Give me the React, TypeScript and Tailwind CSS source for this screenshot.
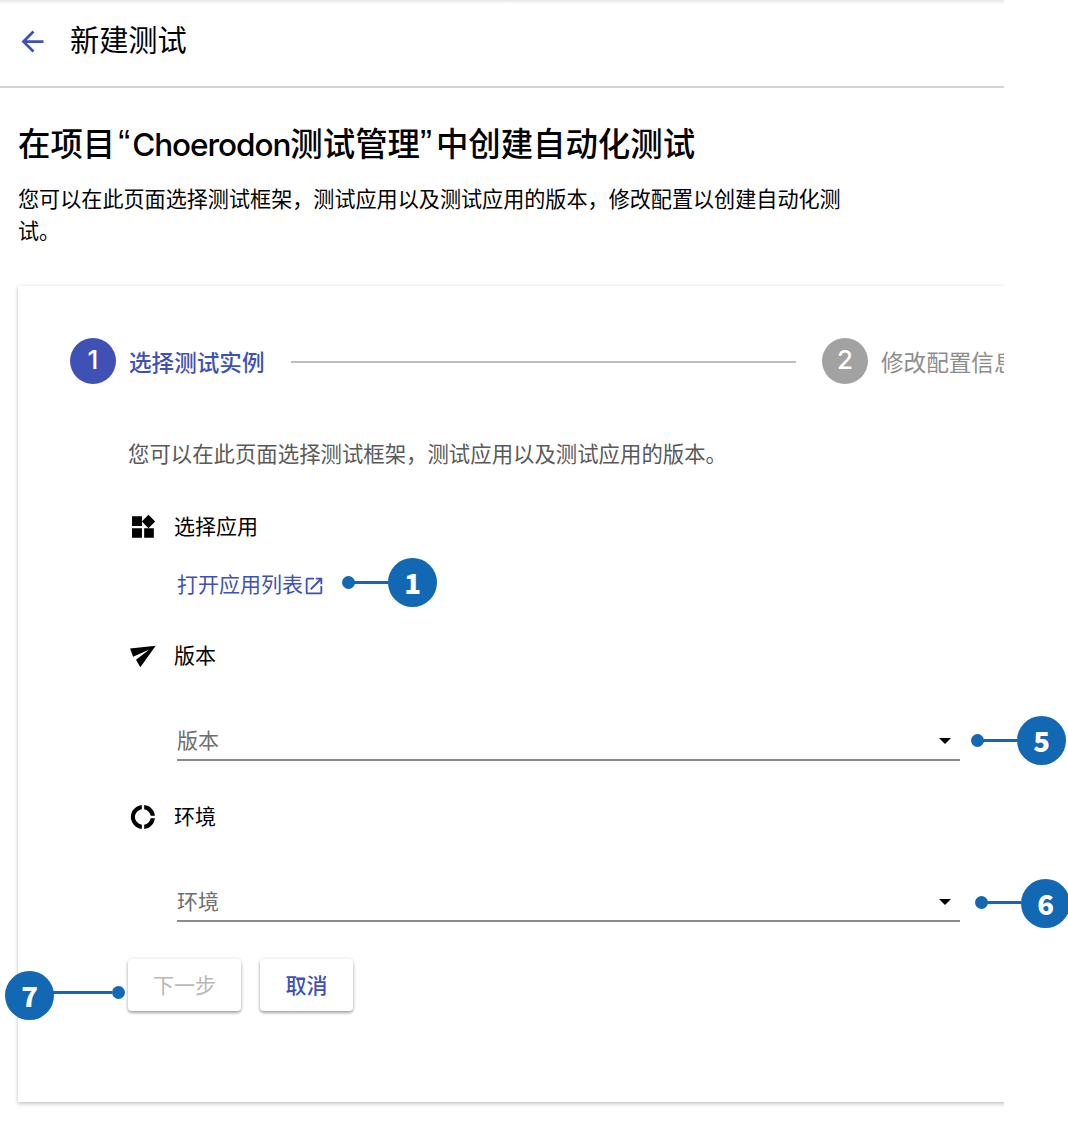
import { ReactNode } from "react";

const cjk = "font-[Inter,'Noto_Sans_CJK_SC',sans-serif]";

function Heading({ icon, label, className }: { icon: ReactNode; label: string; className: string }) {
  return (
    <div className={`flex h-8 items-center ${className}`}>
      <svg viewBox="0 0 24 24" className="mr-[17px] ml-px size-[28px] shrink-0 fill-black">
        {icon}
      </svg>
      <span className="text-[21px] leading-8 text-black">{label}</span>
    </div>
  );
}

function SelectField({ label }: { label: string }) {
  return (
    <div className="mt-[48px] ml-[49px] flex h-[41px] w-[783px] items-start justify-between border-b-2 border-[#8b8b8b]">
      <span className="text-[21px] leading-[41px] text-[#6e6e6e]">{label}</span>
      <svg viewBox="0 0 12 6" className="mt-[18px] mr-[9px] h-[6px] w-[12px] fill-black">
        <path d="M0 0h12L6 6z" />
      </svg>
    </div>
  );
}

function Callout({ n, className, reverse, line, dot }: { n: string; className: string; reverse?: boolean; line: string; dot: string }) {
  return (
    <div className={`absolute flex items-start ${reverse ? "flex-row-reverse" : ""} ${className}`}>
      <div className={`flex items-center ${dot} ${reverse ? "flex-row-reverse" : ""}`}>
        <div className="size-[13px] shrink-0 rounded-full bg-[#1268b3]" />
        <div className={`h-[3px] shrink-0 bg-[#1268b3] ${line}`} />
      </div>
      <div className="flex size-[49px] shrink-0 items-center justify-center rounded-full bg-[#1268b3] font-['Noto_Sans_CJK_SC',sans-serif] text-[27.5px] leading-none font-black text-white">
        <span>{n}</span>
      </div>
    </div>
  );
}

export default function App() {
  return (
    <div className={`relative h-[1125px] w-[1068px] overflow-hidden bg-white ${cjk}`}>
      <div className="h-full w-[1004px] overflow-hidden">
        <header className="flex h-[88px] items-center border-b-2 border-[#d3d3d3] bg-[linear-gradient(#e6e6e6,#ffffff_4px)] pb-[3px]">
          <svg viewBox="0 0 24 24" className="ml-[16px] size-[33px] fill-[#3f51b5]">
            <path d="M20 11H7.83l5.59-5.59L12 4l-8 8 8 8 1.41-1.41L7.83 13H20v-2z" />
          </svg>
          <h1 className="relative -top-px ml-[21px] text-[29.2px] leading-10 text-black">新建测试</h1>
        </header>

        <section className="ml-[18px]">
          <h2 className="mt-[36px] h-10 text-[32.4px] leading-10 font-medium whitespace-nowrap text-black">
            在项目<span className="mr-[2px] ml-[3px] font-['Liberation_Sans',sans-serif] text-[36px]">“</span>
            <span className="text-[31.5px] tracking-[-1.05px]">Choerodon</span>测试管理
            <span className="mr-[4px] font-['Liberation_Sans',sans-serif] text-[36px]">”</span>中创建自动化测试
          </h2>
          <p className="mt-[20px] text-[21.1px] leading-[32px] whitespace-nowrap text-black">
            您可以在此页面选择测试框架，测试应用以及测试应用的版本，修改配置以创建自动化测
            <br />
            试。
          </p>

          <div className="mt-[38px] h-[816px] w-[1100px] pt-[52px] shadow-[0_2px_4px_rgba(0,0,0,0.2),0_0_4px_rgba(0,0,0,0.08)]">
            <div className="ml-[52px] flex h-[46px] items-center whitespace-nowrap">
              <div className="flex size-[46px] items-center justify-center rounded-full bg-[#3f51b5] pb-[2px] text-[26px] leading-none font-medium text-white">1</div>
              <span className="ml-[13px] w-[136px] pt-[3px] text-[22.6px] leading-8 font-medium text-[#3f51b5]">选择测试实例</span>
              <div className="mt-[2px] ml-[26px] h-[2px] w-[505px] bg-[#bdbdbd]" />
              <div className="ml-[26px] flex size-[46px] items-center justify-center rounded-full bg-[#a2a2a2] pb-[2px] text-[26px] leading-none font-medium text-white">2</div>
              <span className="ml-[13px] pt-[3px] text-[22.6px] leading-8 text-[#8c8c8c]">修改配置信息</span>
            </div>

            <div className="ml-[110px]">
              <p className="mt-[54px] h-8 text-[21.4px] leading-8 whitespace-nowrap text-[#595959]">
                您可以在此页面选择测试框架，测试应用以及测试应用的版本。
              </p>

              <Heading
                className="mt-[41px]"
                label="选择应用"
                icon={<path d="M13 13v8.3h8.3v-8.3zM2.6 21.3h8.5v-8.3H2.6zM2.6 2.7v8.5h8.5V2.7zM16.66 1.5L11 7.25 16.66 13l5.76-5.75z" />}
              />
              <a className="mt-[26px] ml-[49px] flex h-8 items-center text-[21px] leading-8 text-[#3f51b5]">
                打开应用列表
                <svg viewBox="0 0 24 24" className="mt-px size-[22px] fill-[#3f51b5]">
                  <path d="M19 19H5V5h7V3H5a2 2 0 0 0-2 2v14a2 2 0 0 0 2 2h14c1.1 0 2-.9 2-2v-7h-2v7zM14 3v2h3.59l-9.83 9.83 1.41 1.41L19 6.41V10h2V3h-7z" />
                </svg>
              </a>

              <Heading className="mt-[39px]" label="版本" icon={<path d="M.9 5.5L22.9 3.2L9.7 21.6L6 15.2L17.5 6.4L3.5 12.6z" />} />
              <SelectField label="版本" />

              <Heading
                className="mt-[40px]"
                label="环境"
                icon={<path d="M11 5.4V1.8C5.8 2.3 1.6 6.8 1.6 12s4.2 9.7 9.4 10.2v-3.6c-3-.5-5.9-3.2-5.9-6.6s2.9-6.1 5.9-6.6zM18.6 11h3.6c-.5-5-4.2-8.7-9.2-9.2v3.6c2.9.5 5.1 2.7 5.6 5.6zM13 18.6v3.6c5-.5 8.7-4.2 9.2-9.2h-3.6c-.5 2.9-2.7 5.1-5.6 5.6z" />}
              />
              <SelectField label="环境" />

              <div className="mt-[37px] flex gap-[19px] text-[21px] leading-8">
                <button className="h-[52px] w-[113px] rounded-[4px] bg-white pt-[2px] text-[#b8b8b8] shadow-[0_2px_3px_rgba(0,0,0,0.32),0_0_4px_rgba(0,0,0,0.1)]">下一步</button>
                <button className="h-[52px] w-[93px] rounded-[4px] bg-white pt-[2px] font-medium text-[#3f51b5] shadow-[0_2px_3px_rgba(0,0,0,0.32),0_0_4px_rgba(0,0,0,0.1)]">取消</button>
              </div>
            </div>
          </div>
        </section>
      </div>

      <Callout n="1" className="top-[558px] left-[342px]" dot="mt-[18px]" line="-ml-px w-[34px]" />
      <Callout n="5" className="top-[716px] left-[971px]" dot="mt-[18px]" line="-ml-px w-[34px]" />
      <Callout n="6" className="top-[879px] left-[975px]" dot="mt-[17px]" line="-ml-px w-[34px]" />
      <Callout n="7" className="top-[971px] left-[5px]" dot="mt-[15px]" line="-ml-px w-[59px]" reverse />
    </div>
  );
}
